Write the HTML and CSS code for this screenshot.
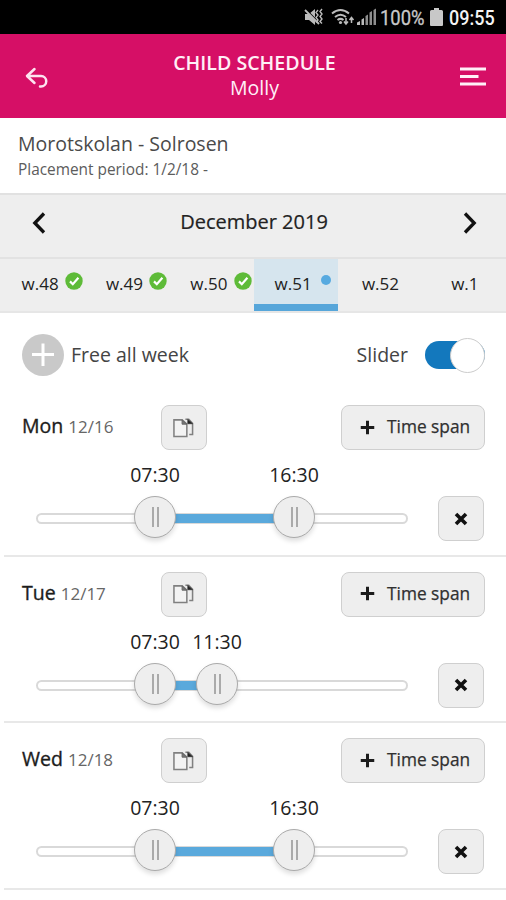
FILE: index.html
```html
<!DOCTYPE html>
<html lang="en">
<head>
<meta charset="utf-8">
<title>Child schedule</title>
<link rel="stylesheet" href="styles.css">
</head>
<body>
<svg class="defs" width="0" height="0" aria-hidden="true">
  <symbol id="check" viewBox="0 0 18 18"><circle cx="9" cy="9" r="8.7" fill="#5ebb38"/><path d="M5 9.4l2.8 2.8 5.6-6.4" fill="none" stroke="#fff" stroke-width="2.2"/></symbol>
  <symbol id="copy" viewBox="0 0 22 20"><path d="M1 1.500h8.500L14.500 6v13H1z" fill="#f3f3f3" stroke="#808080" stroke-width="1.600"/><path d="M9.500 1.500V6h5z" fill="#777" stroke="#666" stroke-width="1"/><path d="M13 .8h3.500l4 4.200v11.800h-3.500" fill="none" stroke="#808080" stroke-width="1.600"/><path d="M15.500 1v4.500h5z" fill="#222" stroke="#333" stroke-width=".8"/></symbol>
  <symbol id="plus" viewBox="0 0 16 16"><path d="M8 .8v14.4M.8 8h14.4" stroke="#1c1c1c" stroke-width="3.2"/></symbol>
  <symbol id="cross" viewBox="0 0 14 14"><path d="M2 2l10 10M12 2L2 12" stroke="#111" stroke-width="3.6"/></symbol>
</svg>
<div class="status">
  <svg width="74" height="20" viewBox="0 0 74 20">
    <path d="M1 7h4l6-5v16l-6-5H1z" fill="#bcbcbc"/>
    <path d="M1 2l15 15" stroke="#000" stroke-width="2"/><path d="M1 3l14 14" stroke="#bcbcbc" stroke-width="1.800"/>
    <path d="M14 3l-2 2.500 2 2.500-2 2.500 2 2.500-2 2.500M18 2l-2 2.500 2 2.500-2 2.500 2 2.500-2 2.500 2 2" fill="none" stroke="#bcbcbc" stroke-width="1.400"/>
    <path d="M28 6.500q8.500-7 17 0M31 10q5.500-4.500 11 0M33.500 13q3-2.300 6 0" fill="none" stroke="#bcbcbc" stroke-width="2"/>
    <circle cx="36.500" cy="15.500" r="1.600" fill="#bcbcbc"/><path d="M42 11v6m-2-2.500l2 2.500 2-2.500M47.500 16v-5.500m-2 2.500l2-2.500 2 2.500" fill="none" stroke="#bcbcbc" stroke-width="1.500"/>
    <path d="M53 15.500l3-1.500v4h-3zM57.500 12.500l2.500-1.500v7h-2.500z" fill="#bcbcbc"/><path d="M61.500 9L64 7.500V18h-2.500zM65.500 5.500L68 4v14h-2.500zM69.500 3L72 1.500V18h-2.500z" fill="#8d8d8d"/>
  </svg>
  <span class="battery-text">100%</span>
  <svg width="13" height="18" viewBox="0 0 13 18"><path d="M4 0h5v2h2.500Q13 2 13 3.500V17q0 1-1 1H1q-1 0-1-1V3.500Q0 2 1.500 2H4z" fill="#c8c8c8"/></svg>
  <span class="clock">09:55</span>
</div>
<header class="header">
  <svg class="back" width="24" height="24" viewBox="0 0 24 24"><path d="M9.500 3L2 10l7.500 7M2.500 10H16a5.200 5.200 0 0 1 0 10.500h-1" fill="none" stroke="#fde3f0" stroke-width="2.500" stroke-linecap="round" stroke-linejoin="round"/></svg>
  <div class="heading"><h1>CHILD SCHEDULE</h1><p>Molly</p></div>
  <svg class="menu" width="26" height="20" viewBox="0 0 26 20"><path d="M0 2h26M0 9.500h18.500M0 17h26" stroke="#fff0f7" stroke-width="3"/></svg>
</header>
<section class="info"><h2>Morotskolan - Solrosen</h2><p>Placement period: 1/2/18 -</p></section>
<nav class="month">
  <svg width="14" height="22" viewBox="0 0 14 22"><path d="M12 1.500L2.800 11l9.200 9.500" fill="none" stroke="#111" stroke-width="3.300"/></svg>
  <span>December 2019</span>
  <svg width="14" height="22" viewBox="0 0 14 22"><path d="M2 1.500l9.200 9.500L2 20.500" fill="none" stroke="#111" stroke-width="3.300"/></svg>
</nav>
<nav class="weeks">
  <div class="week marked">w.48<svg class="badge"><use href="#check"/></svg></div>
  <div class="week marked">w.49<svg class="badge"><use href="#check"/></svg></div>
  <div class="week marked">w.50<svg class="badge"><use href="#check"/></svg></div>
  <div class="week marked active">w.51<i class="dot"></i></div>
  <div class="week">w.52</div>
  <div class="week">w.1</div>
</nav>
<div class="tools">
  <svg width="42" height="42" viewBox="0 0 42 42"><circle cx="21" cy="21" r="21" fill="#c9c9c9"/><path d="M21 9.500v22.500M10 20.500h22" stroke="#fff" stroke-width="3"/></svg>
  <span class="free">Free all week</span>
  <span class="slider-label">Slider</span>
  <span class="toggle"><i></i></span>
</div>
<main>
  <section class="day">
    <div class="top"><h3>Mon <small>12/16</small></h3><button class="square"><svg class="copy"><use href="#copy"/></svg></button><button class="span"><svg class="plus"><use href="#plus"/></svg>Time span</button></div>
    <div class="bottom"><div class="slider" style="--from:119px;--to:258px"><b class="from">07:30</b><b class="to">16:30</b><div class="track"><div class="fill"></div></div><i class="handle from"></i><i class="handle to"></i></div><button class="square"><svg class="cross"><use href="#cross"/></svg></button></div>
  </section>
  <section class="day">
    <div class="top"><h3>Tue <small>12/17</small></h3><button class="square"><svg class="copy"><use href="#copy"/></svg></button><button class="span"><svg class="plus"><use href="#plus"/></svg>Time span</button></div>
    <div class="bottom"><div class="slider" style="--from:119px;--to:181px"><b class="from">07:30</b><b class="to">11:30</b><div class="track"><div class="fill"></div></div><i class="handle from"></i><i class="handle to"></i></div><button class="square"><svg class="cross"><use href="#cross"/></svg></button></div>
  </section>
  <section class="day">
    <div class="top"><h3>Wed <small>12/18</small></h3><button class="square"><svg class="copy"><use href="#copy"/></svg></button><button class="span"><svg class="plus"><use href="#plus"/></svg>Time span</button></div>
    <div class="bottom"><div class="slider" style="--from:119px;--to:258px"><b class="from">07:30</b><b class="to">16:30</b><div class="track"><div class="fill"></div></div><i class="handle from"></i><i class="handle to"></i></div><button class="square"><svg class="cross"><use href="#cross"/></svg></button></div>
  </section>
</main>
</body>
</html>
```
FILE: styles.css
```css
* { box-sizing: border-box; margin: 0; padding: 0; }
body { width: 506px; height: 900px; overflow: hidden; background: #fff; color: #222; font: 19.5px/26px "Open Sans", sans-serif; }
svg { display: block; flex: none; }
.defs { position: absolute; }
h1, h2, h3, b, small { font-size: inherit; font-weight: 400; }
.status { height: 34px; background: #000; color: #c8c8c8; display: flex; align-items: center; padding-left: 304px; font: 20px/34px Roboto, sans-serif; white-space: nowrap; }
.battery-text { width: 50px; margin-left: 2px; transform: scaleX(.92); transform-origin: left; padding-top: 2px; -webkit-text-stroke: .3px #c8c8c8; }
.clock { margin-left: 6px; color: #f4f4f4; font-weight: 500; transform: scaleX(.9); transform-origin: left; padding-top: 2px; }
.header { height: 84px; background: #d60f66; color: #fff0f7; display: flex; align-items: center; justify-content: space-between; padding: 0 20px 0 25px; }
.back { margin-top: 4px; }
.menu { margin-top: 1px; }
.heading { text-align: center; line-height: 25px; margin-top: -2px; }
.heading h1 { font-weight: 600; font-size: 19.6px; }
.info { height: 75px; padding: 13px 18px; color: #4a4a4a; }
.info p { font-size: 15.4px; line-height: 25px; color: #5c5c5c; }
.month { height: 64px; background: #eee; border-top: 2px solid #e1e1e1; display: flex; align-items: center; justify-content: space-between; padding: 0 29px 6px 32px; font-size: 20px; }
.month span { margin: -2px 1px 0 0; -webkit-text-stroke: .2px #222; }
.weeks { height: 56px; background: #eee; border-top: 2px solid #e2e2e2; border-bottom: 2px solid #e6e6e6; display: grid; grid-template-columns: repeat(6, 1fr); padding-left: 1px; margin-right: -1px; }
.week { position: relative; font-size: 17px; line-height: 50px; height: 52px; text-align: center; }
.marked { padding-right: 6px; }
.badge { position: absolute; left: 64px; top: 13px; width: 18px; height: 18px; }
.active { background: #d6e5ee; box-shadow: inset 0 -7px #56a6da; }
.dot { position: absolute; left: 67px; top: 16px; width: 10px; height: 10px; border-radius: 50%; background: #57aae0; }
.tools { height: 76px; padding: 8px 21px 0 22px; display: flex; align-items: center; color: #444; }
.free { margin-left: 7px; }
.slider-label { margin-left: auto; }
.toggle { width: 60px; height: 28px; margin-left: 17px; border-radius: 14px; background: #1378bd; }
.toggle i { display: block; width: 35px; height: 35px; margin: -3px 0 0 25px; border: 1px solid #ccc; border-radius: 50%; background: #fff; }
main { padding-top: 1px; }
.day { height: 166.67px; padding: 15px 21px 0 22px; background: linear-gradient(#e8e8e8, #e8e8e8) 4px 100% / 100% 2px no-repeat; }
.top { display: flex; height: 45px; }
h3 { width: 138.5px; line-height: 42px; color: #1c1c1c; -webkit-text-stroke: .35px #1c1c1c; }
small { font-size: 17px; color: #666; -webkit-text-stroke: 0; }
button { font: 400 17.3px/40px "Open Sans", sans-serif; color: #303030; background: #eee; border: 1.5px solid #cfcfcf; border-radius: 8px; display: flex; align-items: center; }
.square { width: 46px; height: 45px; justify-content: center; flex: none; }
.copy { width: 21px; height: 20px; }
.cross { width: 14px; height: 14px; }
.span { width: 144px; height: 45px; margin-left: auto; padding: 0 0 1px 18px; -webkit-text-stroke: .25px #303030; }
.plus { width: 15px; height: 15px; margin-right: 12px; }
.bottom { display: flex; justify-content: space-between; align-items: flex-end; height: 91px; padding-left: 14px; margin-right: 1px; }
.slider { position: relative; width: 372px; height: 91px; padding-top: 63px; }
.slider b { position: absolute; top: 12px; transform: translateX(-50%); }
.track { height: 11px; border: 2px solid #d9d9d9; border-radius: 6px; background: #fff; }
.fill { height: 9px; margin: -1px 0 0 calc(var(--from) - 2px); width: calc(var(--to) - var(--from)); background: #5aa9dc; }
.from { left: var(--from); }
.to { left: var(--to); }
.handle { position: absolute; top: 46px; width: 42px; height: 42px; margin-left: -21px; border: 1.5px solid #aaa; border-radius: 50%; background: linear-gradient(90deg, #aaa 2px, transparent 2px 5px, #aaa 5px) center / 7px 20px no-repeat #eee; box-shadow: 0 3px 5px #0002; }
```
